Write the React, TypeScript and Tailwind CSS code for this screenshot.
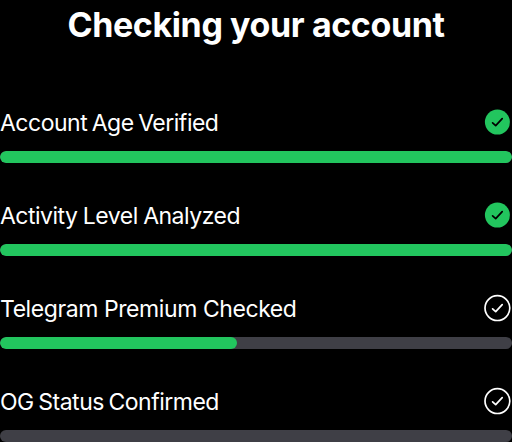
const items = [
  { label: "Account Age Verified", value: 100, spacing: "tracking-[-0.5px] [word-spacing:-1.4px]" },
  { label: "Activity Level Analyzed", value: 100, spacing: "tracking-[-0.5px] [word-spacing:-0.6px]" },
  { label: "Telegram Premium Checked", value: 46.3, spacing: "tracking-[-0.42px]" },
  { label: "OG Status Confirmed", value: 0, spacing: "tracking-[-0.5px] [word-spacing:-1.4px]" },
];

function CheckCircle({ done }: { done: boolean }) {
  return (
    <svg viewBox="0 0 30 30" className="size-[30px] shrink-0" fill="none">
      <circle cx="15.4" cy="15.1" r={done ? 12.5 : 12.4} fill={done ? "#22c55e" : "none"} stroke={done ? "none" : "white"} strokeWidth="1.7" />
      <path d="M10.6 15.8 13.7 18.7 20.2 11.7" stroke={done ? "black" : "white"} strokeWidth="1.7" strokeLinecap="round" strokeLinejoin="round" />
    </svg>
  );
}

export default function App() {
  return (
    <main className="h-[442px] w-[512px] overflow-hidden bg-black font-['Inter',sans-serif] text-white">
      <h1 className="pt-1 text-center text-[34px] leading-[42px] font-bold tracking-[-0.4px]">Checking your account</h1>
      <div className="mt-[61px] flex flex-col gap-[30px]">
        {items.map((item) => (
          <section key={item.label} className="h-[63px]">
            <div className="flex h-[30px] items-center justify-between">
              <span className={`pt-[2px] text-[23px] leading-[30px] whitespace-nowrap ${item.spacing}`}>{item.label}</span>
              <CheckCircle done={item.value === 100} />
            </div>
            <div className="mt-[14px] h-3 overflow-hidden rounded-full bg-[#3f3f46]">
              <div className="h-full rounded-full bg-[#22c55e]" style={{ width: `${item.value}%` }} />
            </div>
          </section>
        ))}
      </div>
    </main>
  );
}
